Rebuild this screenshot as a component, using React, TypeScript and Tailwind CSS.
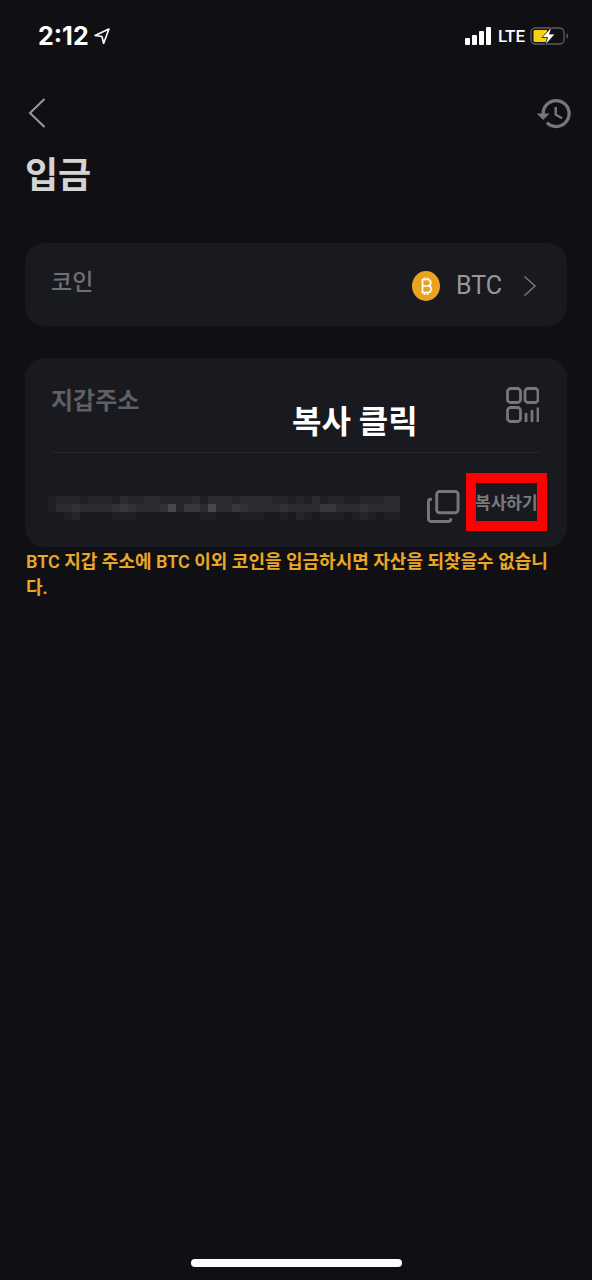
import { MdHistory } from 'react-icons/md';

const KR = "font-['Roboto','Noto_Sans_CJK_KR',sans-serif]";

// mosaic of the blurred wallet address: 3 rows of 8px cells, lightness per cell
const MOSAIC = [
  '12221222132233222231333233332212131221122233',
  '13343333454333462553633543333433335533343333',
  '00120000111000000001100011100102101110121011',
];
const SHADES = ['#191a20', '#1f2026', '#26272c', '#2c2d32', '#323338', '#37383d', '#47484c'];

function SignalBars() {
  return (
    <div className="flex items-end gap-[2px] mr-[2px]">
      <div className="w-[5px] h-[7px] rounded-[1px] bg-white" />
      <div className="w-[5px] h-[10px] rounded-[1px] bg-white" />
      <div className="w-[5px] h-[14px] rounded-[1px] bg-white" />
      <div className="w-[5px] h-[18px] rounded-[1px] bg-white" />
    </div>
  );
}

function Battery() {
  return (
    <svg width="39" height="20" viewBox="0 0 39 20">
      <rect x="1" y="2" width="33" height="16" rx="4.500" fill="none" stroke="#5e5e60" strokeWidth="1.300" />
      <path d="M3.500 5.500a1.500 1.500 0 0 1 1.500-1.500h12v12H5a1.500 1.500 0 0 1-1.500-1.500z" fill="#f7d00f" />
      <path d="M36.500 7.500c1.200.3 1.600 1.400 1.600 2.500s-.4 2.200-1.600 2.500z" fill="#5e5e60" />
      <path d="M22 0.500 12 11.500h5.500L15 19.500l10-11.500h-5.500z" fill="#fff" stroke="#101014" strokeWidth="0.800" />
    </svg>
  );
}

function BitcoinIcon() {
  return (
    <svg width="28" height="30" viewBox="0 0 28 30">
      <ellipse cx="14" cy="15" rx="14" ry="15" fill="#eaa31f" />
      <path d="M10.500 8.500h5a3 3 0 0 1 0 6.500h-5zM10.500 15h5.500a3.200 3.200 0 0 1 0 6.500h-5.500zM12.500 6.500v2.500M15.500 6.500v2.500M12.500 21.500v2.500M15.500 21.500v2.500" fill="none" stroke="#fff" strokeWidth="1.700" />
    </svg>
  );
}

function QrIcon() {
  return (
    <svg width="33" height="36" viewBox="0 0 33 36" fill="none" stroke="#76767b" strokeWidth="2.800">
      <rect x="1.500" y="1.500" width="13" height="14" rx="3" />
      <rect x="19" y="1.500" width="13" height="14" rx="3" />
      <rect x="1.500" y="20.500" width="13" height="14" rx="3" />
      <path d="M20 26v9M26 23v12M32 20.500v14.500" />
    </svg>
  );
}

function CopyIcon() {
  return (
    <svg width="33" height="33" viewBox="0 0 34 34" fill="none" stroke="#76767b" strokeWidth="3">
      <rect x="10" y="1.500" width="22" height="22" rx="3" />
      <path d="M5 9.500H4a2.500 2.500 0 0 0-2.500 2.500v17.500A3 3 0 0 0 4.500 32.500H22a2.500 2.500 0 0 0 2.500-2.500v-1" />
    </svg>
  );
}

function ChevronIcon() {
  return (
    <svg width="14" height="22" viewBox="0 0 14 22" fill="none" stroke="#77777a" strokeWidth="1.500" className="ml-[21px]">
      <path d="M1.500 1.500 12 11 1.500 20.500" />
    </svg>
  );
}

function BlurredAddress() {
  return (
    <div className="flex flex-col w-[352px] mt-[16px] overflow-hidden">
      {MOSAIC.map((row, r) => (
        <div key={r} className="flex h-[8px]">
          {row.split('').map((c, i) => (
            <div key={i} className="w-[8px] h-[8px] shrink-0" style={{ backgroundColor: SHADES[Number(c)] }} />
          ))}
        </div>
      ))}
    </div>
  );
}

export default function App() {
  return (
    <div className={`relative w-[592px] h-[1280px] overflow-hidden bg-[#101014] ${KR}`}>
      {/* status bar */}
      <div className="flex items-center justify-between h-[36px] mt-[18px] pl-[38px] pr-[23px]">
        <div className="flex items-center gap-[5px]">
          <span className="font-['Inter',sans-serif] text-[25px] font-bold text-white leading-none">2:12</span>
          <svg width="16" height="16" viewBox="0 0 15 15" fill="none" stroke="#fff" strokeWidth="1.500" strokeLinejoin="round">
            <path d="M14 1 1 7l6.500 1L9 14.500z" />
          </svg>
        </div>
        <div className="flex items-center gap-[5px]">
          <SignalBars />
          <span className="font-['Roboto',sans-serif] text-[17px] font-medium text-white leading-none">LTE</span>
          <Battery />
        </div>
      </div>

      {/* nav */}
      <div className="flex items-center justify-between h-[44px] mt-[37px] pl-[28px] pr-[18px]">
        <svg width="18" height="30" viewBox="0 0 18 30" fill="none" stroke="#9a9a9c" strokeWidth="2">
          <path d="M16.500 1 2 15l14.500 14" />
        </svg>
        <MdHistory size={39} className="text-[#77777a]" />
      </div>

      <h1 className="mt-[16px] pl-[25px] text-[36px] font-bold leading-[50px] text-[#d4d4d5]">입금</h1>

      {/* coin card */}
      <div className="flex items-center justify-between h-[83px] mt-[42px] mx-[25px] pl-[26px] pr-[26px] rounded-[20px] bg-[#191a20]">
        <span className="text-[23px] font-medium text-[#6f6f74] mb-[2px]">코인</span>
        <div className="flex items-center mt-[2px] mr-[4px]">
          <BitcoinIcon />
          <span className="ml-[16px] font-['Roboto',sans-serif] text-[25px] text-[#98989c]">BTC</span>
          <ChevronIcon />
        </div>
      </div>

      {/* wallet card */}
      <div className="h-[189px] mt-[32px] mx-[25px] px-[26px] rounded-[20px] bg-[#191a20]">
        <div className="flex items-center justify-between h-[95px] border-b border-[#25262b]">
          <span className="mb-[8px] text-[24px] font-semibold text-[#5f5f64]">지갑주소</span>
          <div className="mr-[2px]">
            <QrIcon />
          </div>
        </div>
        <div className="flex items-center h-[94px] -ml-[3px]">
          <BlurredAddress />
          <div className="mt-[12px] ml-[27px] shrink-0">
            <CopyIcon />
          </div>
          <span className="mt-[8px] ml-[15px] whitespace-nowrap text-[17px] font-semibold text-[#7a7a7e]">복사하기</span>
        </div>
      </div>

      <p className="mt-[2px] pl-[26px] pr-[25px] text-[18px] font-semibold leading-[26px] text-[#e9a825] break-all">
        BTC 지갑 주소에 BTC 이외 코인을 입금하시면 자산을 되찾을수 없습니다.
      </p>

      {/* annotation drawn over the screenshot */}
      <span className="absolute left-[292px] top-[400px] text-[32px] font-bold leading-[44px] text-white">복사 클릭</span>
      <div className="absolute left-[466px] top-[473px] w-[81px] h-[58px] border-[10px] border-[#ff0000]" />

      <div className="absolute left-[191px] top-[1259px] w-[211px] h-[8px] rounded-full bg-white" />
    </div>
  );
}
